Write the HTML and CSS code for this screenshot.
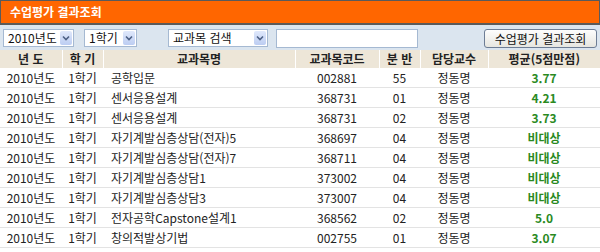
FILE: index.html
```html
<!DOCTYPE html>
<html lang="ko">
<head>
  <meta charset="UTF-8">
  <title>수업평가 결과조회</title>
  <link rel="stylesheet" href="styles.css">
</head>
<body>
  <div class="title-bar">수업평가 결과조회</div>

  <div class="toolbar">
    <div class="combo combo-year">
      <span class="combo-text">2010년도</span>
      <span class="combo-btn"><svg width="8" height="6" viewBox="0 0 8 6"><path d="M1 1.5 L4 4.5 L7 1.5" fill="none" stroke="#4d6185" stroke-width="1.6"/></svg></span>
    </div>
    <div class="combo combo-term">
      <span class="combo-text">1학기</span>
      <span class="combo-btn"><svg width="8" height="6" viewBox="0 0 8 6"><path d="M1 1.5 L4 4.5 L7 1.5" fill="none" stroke="#4d6185" stroke-width="1.6"/></svg></span>
    </div>
    <div class="combo combo-search">
      <span class="combo-text">교과목 검색</span>
      <span class="combo-btn"><svg width="8" height="6" viewBox="0 0 8 6"><path d="M1 1.5 L4 4.5 L7 1.5" fill="none" stroke="#4d6185" stroke-width="1.6"/></svg></span>
    </div>
    <div class="text-input"></div>
    <button class="btn">수업평가 결과조회</button>
  </div>

  <table class="result">
    <colgroup>
      <col style="width:62px"><col style="width:41px"><col style="width:192px"><col style="width:84px">
      <col style="width:41px"><col style="width:68px"><col style="width:112px">
    </colgroup>
    <thead>
      <tr>
        <th>년 도</th><th>학 기</th><th>교과목명</th><th>교과목코드</th><th>분 반</th><th>담당교수</th><th>평균(5점만점)</th>
      </tr>
    </thead>
    <tbody>
      <tr><td>2010년도</td><td>1학기</td><td class="name">공학입문</td><td>002881</td><td>55</td><td>정동명</td><td class="score">3.77</td></tr>
      <tr><td>2010년도</td><td>1학기</td><td class="name">센서응용설계</td><td>368731</td><td>01</td><td>정동명</td><td class="score">4.21</td></tr>
      <tr><td>2010년도</td><td>1학기</td><td class="name">센서응용설계</td><td>368731</td><td>02</td><td>정동명</td><td class="score">3.73</td></tr>
      <tr><td>2010년도</td><td>1학기</td><td class="name">자기계발심층상담(전자)5</td><td>368697</td><td>04</td><td>정동명</td><td class="score">비대상</td></tr>
      <tr><td>2010년도</td><td>1학기</td><td class="name">자기계발심층상담(전자)7</td><td>368711</td><td>04</td><td>정동명</td><td class="score">비대상</td></tr>
      <tr><td>2010년도</td><td>1학기</td><td class="name">자기계발심층상담1</td><td>373002</td><td>04</td><td>정동명</td><td class="score">비대상</td></tr>
      <tr><td>2010년도</td><td>1학기</td><td class="name">자기계발심층상담3</td><td>373007</td><td>04</td><td>정동명</td><td class="score">비대상</td></tr>
      <tr><td>2010년도</td><td>1학기</td><td class="name">전자공학Capstone설계1</td><td>368562</td><td>02</td><td>정동명</td><td class="score">5.0</td></tr>
      <tr><td>2010년도</td><td>1학기</td><td class="name">창의적발상기법</td><td>002755</td><td>01</td><td>정동명</td><td class="score">3.07</td></tr>
    </tbody>
  </table>
</body>
</html>
```

FILE: styles.css
```css
html, body {
  margin: 0;
  padding: 0;
  background: #fff;
  color: #222;
  font-family: "Noto Sans CJK KR", "Liberation Sans", sans-serif;
  font-size: 12px;
  width: 600px;
  overflow: hidden;
}
.title-bar {
  height: 22px;
  line-height: 22px;
  background: #ff6600;
  border: 1px solid #5a5a5a;
  border-bottom-width: 2px;
  color: #fff;
  font-weight: bold;
  font-size: 12px;
  padding-left: 9px;
  box-sizing: content-box;
}
.toolbar {
  height: 24px;
  background: #dbe5ef;
  display: flex;
  align-items: center;
  padding: 0 3px;
  padding-top: 1px;
}
.combo {
  height: 18px;
  background: #fff;
  border: 1px solid #a5b9d2;
  box-sizing: border-box;
  display: flex;
  align-items: center;
  justify-content: space-between;
  padding: 1px;
}
.combo-text {
  padding-left: 3px;
  font-size: 12px;
  color: #111;
  line-height: 14px;
}
.combo-btn {
  width: 12px;
  height: 14px;
  background: linear-gradient(#dfe8fb, #bccdf2);
  border-radius: 2px;
  display: flex;
  align-items: center;
  justify-content: center;
}
.combo-year { width: 71px; }
.combo-term { width: 53px; margin-left: 10px; }
.combo-search { width: 100px; margin-left: 31px; }
.text-input {
  width: 142px;
  height: 19px;
  margin-left: 8px;
  background: #fff;
  border: 1px solid #a5b9d2;
  box-sizing: border-box;
}
.btn {
  margin-left: 66px;
  width: 113px;
  height: 19px;
  padding: 0;
  border: 1px solid #6d7d95;
  border-radius: 3px;
  background: linear-gradient(#fdfdfd, #e6e6e0);
  font-family: inherit;
  font-size: 12px;
  color: #111;
  line-height: 15px;
}
.result {
  width: 600px;
  border-collapse: collapse;
  table-layout: fixed;
}
.result th {
  height: 18px;
  padding: 0;
  background: #ede6d8;
  border-left: 1px solid #fff;
  font-weight: bold;
  font-size: 12px;
  color: #222;
  line-height: 18px;
}
.result th:first-child { border-left: none; }
.result td {
  height: 19px;
  padding: 0;
  text-align: center;
  border-bottom: 1px solid #e3e3e3;
  font-size: 12px;
  line-height: 19px;
  color: #222;
}
.result td.name {
  text-align: left;
  padding-left: 8px;
}
.result td.score {
  color: #2a8a1f;
  font-weight: bold;
}
```
